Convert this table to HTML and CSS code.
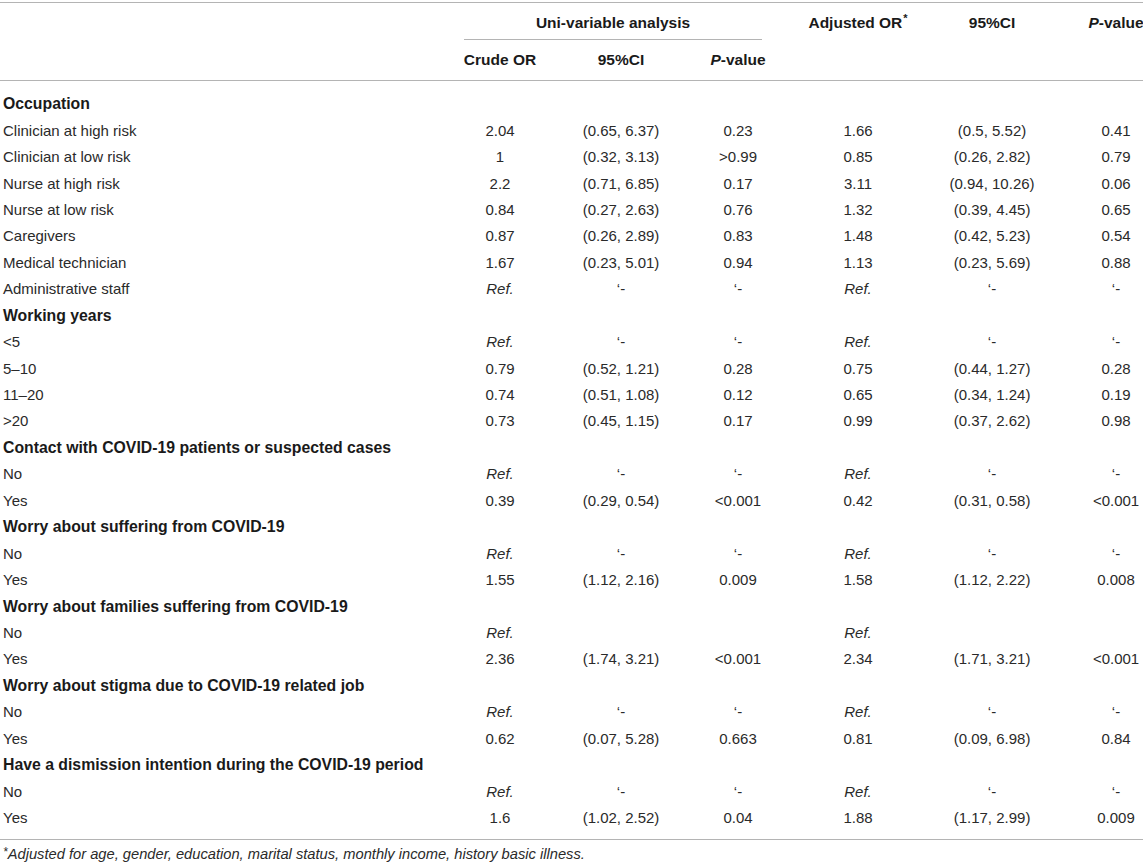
FILE: index.html
```html
<!DOCTYPE html>
<html>
<head>
<meta charset="utf-8">
<link rel="stylesheet" href="styles.css">
</head>
<body>
<div class="wrap">
<table class="or-table">
  <colgroup>
    <col class="c1"><col class="c2"><col class="c3"><col class="c4"><col class="c5"><col class="c6"><col class="c7">
  </colgroup>
  <thead>
    <tr class="h1">
      <th rowspan="2" class="lab"></th>
      <th colspan="3" class="group"><div class="group-in">Uni-variable analysis</div></th>
      <th rowspan="2" class="top">Adjusted OR<sup>*</sup></th>
      <th rowspan="2" class="top">95%CI</th>
      <th rowspan="2" class="top"><i>P</i>-value</th>
    </tr>
    <tr class="h2">
      <th>Crude OR</th>
      <th>95%CI</th>
      <th><i>P</i>-value</th>
    </tr>
  </thead>
  <tbody>
    <tr class="sec first"><td class="lab" colspan="7">Occupation</td></tr>
    <tr><td class="lab">Clinician at high risk</td><td>2.04</td><td>(0.65, 6.37)</td><td>0.23</td><td>1.66</td><td>(0.5, 5.52)</td><td>0.41</td></tr>
    <tr><td class="lab">Clinician at low risk</td><td>1</td><td>(0.32, 3.13)</td><td>&gt;0.99</td><td>0.85</td><td>(0.26, 2.82)</td><td>0.79</td></tr>
    <tr><td class="lab">Nurse at high risk</td><td>2.2</td><td>(0.71, 6.85)</td><td>0.17</td><td>3.11</td><td>(0.94, 10.26)</td><td>0.06</td></tr>
    <tr><td class="lab">Nurse at low risk</td><td>0.84</td><td>(0.27, 2.63)</td><td>0.76</td><td>1.32</td><td>(0.39, 4.45)</td><td>0.65</td></tr>
    <tr><td class="lab">Caregivers</td><td>0.87</td><td>(0.26, 2.89)</td><td>0.83</td><td>1.48</td><td>(0.42, 5.23)</td><td>0.54</td></tr>
    <tr><td class="lab">Medical technician</td><td>1.67</td><td>(0.23, 5.01)</td><td>0.94</td><td>1.13</td><td>(0.23, 5.69)</td><td>0.88</td></tr>
    <tr><td class="lab">Administrative staff</td><td><i>Ref.</i></td><td>‘-</td><td>‘-</td><td><i>Ref.</i></td><td>‘-</td><td>‘-</td></tr>
    <tr class="sec"><td class="lab" colspan="7">Working years</td></tr>
    <tr><td class="lab">&lt;5</td><td><i>Ref.</i></td><td>‘-</td><td>‘-</td><td><i>Ref.</i></td><td>‘-</td><td>‘-</td></tr>
    <tr><td class="lab">5–10</td><td>0.79</td><td>(0.52, 1.21)</td><td>0.28</td><td>0.75</td><td>(0.44, 1.27)</td><td>0.28</td></tr>
    <tr><td class="lab">11–20</td><td>0.74</td><td>(0.51, 1.08)</td><td>0.12</td><td>0.65</td><td>(0.34, 1.24)</td><td>0.19</td></tr>
    <tr><td class="lab">&gt;20</td><td>0.73</td><td>(0.45, 1.15)</td><td>0.17</td><td>0.99</td><td>(0.37, 2.62)</td><td>0.98</td></tr>
    <tr class="sec"><td class="lab" colspan="7">Contact with COVID-19 patients or suspected cases</td></tr>
    <tr><td class="lab">No</td><td><i>Ref.</i></td><td>‘-</td><td>‘-</td><td><i>Ref.</i></td><td>‘-</td><td>‘-</td></tr>
    <tr><td class="lab">Yes</td><td>0.39</td><td>(0.29, 0.54)</td><td>&lt;0.001</td><td>0.42</td><td>(0.31, 0.58)</td><td>&lt;0.001</td></tr>
    <tr class="sec"><td class="lab" colspan="7">Worry about suffering from COVID-19</td></tr>
    <tr><td class="lab">No</td><td><i>Ref.</i></td><td>‘-</td><td>‘-</td><td><i>Ref.</i></td><td>‘-</td><td>‘-</td></tr>
    <tr><td class="lab">Yes</td><td>1.55</td><td>(1.12, 2.16)</td><td>0.009</td><td>1.58</td><td>(1.12, 2.22)</td><td>0.008</td></tr>
    <tr class="sec"><td class="lab" colspan="7">Worry about families suffering from COVID-19</td></tr>
    <tr><td class="lab">No</td><td><i>Ref.</i></td><td></td><td></td><td><i>Ref.</i></td><td></td><td></td></tr>
    <tr><td class="lab">Yes</td><td>2.36</td><td>(1.74, 3.21)</td><td>&lt;0.001</td><td>2.34</td><td>(1.71, 3.21)</td><td>&lt;0.001</td></tr>
    <tr class="sec"><td class="lab" colspan="7">Worry about stigma due to COVID-19 related job</td></tr>
    <tr><td class="lab">No</td><td><i>Ref.</i></td><td>‘-</td><td>‘-</td><td><i>Ref.</i></td><td>‘-</td><td>‘-</td></tr>
    <tr><td class="lab">Yes</td><td>0.62</td><td>(0.07, 5.28)</td><td>0.663</td><td>0.81</td><td>(0.09, 6.98)</td><td>0.84</td></tr>
    <tr class="sec"><td class="lab" colspan="7">Have a dismission intention during the COVID-19 period</td></tr>
    <tr><td class="lab">No</td><td><i>Ref.</i></td><td>‘-</td><td>‘-</td><td><i>Ref.</i></td><td>‘-</td><td>‘-</td></tr>
    <tr class="last"><td class="lab">Yes</td><td>1.6</td><td>(1.02, 2.52)</td><td>0.04</td><td>1.88</td><td>(1.17, 2.99)</td><td>0.009</td></tr>
  </tbody>
</table>
<p class="note"><sup>*</sup>Adjusted for age, gender, education, marital status, monthly income, history basic illness.</p>
</div>
</body>
</html>
```

FILE: styles.css
```css
html, body {
  margin: 0;
  padding: 0;
  background: #fff;
  overflow: hidden;
}
body {
  font-family: "Liberation Sans", Arial, Helvetica, sans-serif;
  color: #2a2a2a;
}
.wrap {
  padding-top: 2px;
  width: 1170px;
}
.or-table {
  border-collapse: collapse;
  table-layout: fixed;
  width: 1170px;
  font-size: 15px;
}
.c1 { width: 440px; }
.c2 { width: 120px; }
.c3 { width: 122px; }
.c4 { width: 112px; }
.c5 { width: 128px; }
.c6 { width: 140px; }
.c7 { width: 108px; }

.or-table thead tr.h1 th {
  border-top: 1px solid #b4b4b4;
}
.or-table thead th {
  font-weight: bold;
  font-size: 15.5px;
  color: #1a1a1a;
  text-align: center;
  padding: 0;
  line-height: 18px;
}
.or-table thead th.top {
  vertical-align: top;
  padding-top: 11px;
}
.or-table thead th.group {
  padding: 11px 0 0 0;
  height: 36px;
  box-sizing: border-box;
  vertical-align: top;
}
.group-in {
  margin: 0 32px 0 24px;
  padding-bottom: 7px;
  border-bottom: 1px solid #b4b4b4;
}
.or-table thead tr.h2 th {
  height: 40px;
  vertical-align: middle;
  padding-top: 1px;
  box-sizing: border-box;
}
.or-table thead tr.h2 th,
.or-table thead th[rowspan] {
  border-bottom: 1px solid #b4b4b4;
}
.or-table sup {
  font-size: 11px;
  line-height: 11px;
  vertical-align: top;
  position: relative;
  top: -1px;
  margin-left: 1px;
}
.or-table tbody td {
  text-align: center;
  padding: 0;
  height: 26.45px;
  line-height: 18px;
  vertical-align: middle;
}
.or-table tbody td.lab {
  text-align: left;
  padding-left: 3px;
}
.or-table tbody tr.sec td {
  font-weight: bold;
  font-size: 15.8px;
  color: #1a1a1a;
}
.or-table tbody tr.first td {
  padding-top: 11px;
  height: 37.45px;
  box-sizing: border-box;
  vertical-align: middle;
}
.or-table tbody tr.last td {
  padding-bottom: 8px;
  height: 34.45px;
  box-sizing: border-box;
  border-bottom: 1px solid #b4b4b4;
}
.note {
  margin: 0;
  padding: 6px 0 0 3px;
  font-size: 14.7px;
  font-style: italic;
  color: #2a2a2a;
  line-height: 17px;
}
.note sup {
  font-size: 12px;
  line-height: 12px;
  vertical-align: top;
  position: relative;
  top: 0;
}
```
